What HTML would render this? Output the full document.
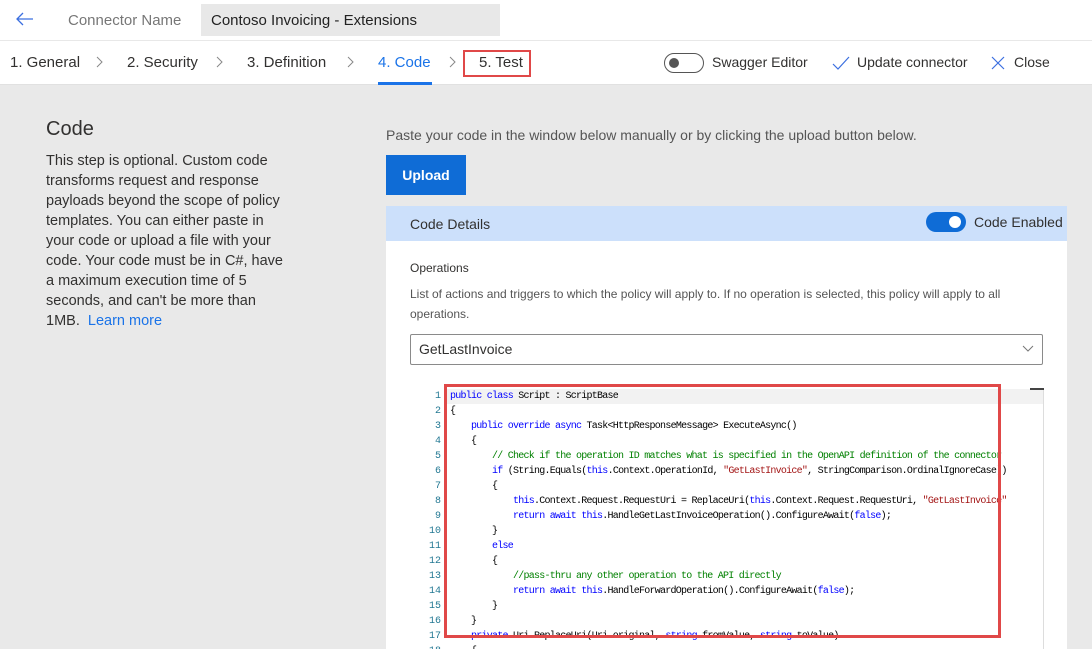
<!DOCTYPE html>
<html><head><style>
*{margin:0;padding:0;box-sizing:border-box}
body{width:1092px;height:649px;overflow:hidden;background:#e9e9e9;font-family:"Liberation Sans",sans-serif;color:#323130;position:relative}
.a{position:absolute}
.top{left:0;top:0;width:1092px;height:85px;background:#fff;border-bottom:1px solid #e1e1e1}
.t{font-size:15px;white-space:nowrap}
.code{font-family:"Liberation Mono",monospace;font-size:10px;letter-spacing:-0.75px;line-height:15px;white-space:pre;color:#000}
.ln{font-family:"Liberation Mono",monospace;font-size:10px;line-height:15px;text-align:right;color:#237893;width:24px;white-space:pre}
.k{color:#0000ff}.c{color:#008000}.s{color:#a31515}
</style></head><body>
<div class="a top"></div>
<div class="a" style="left:0;top:40px;width:1092px;height:1px;background:#e8e8e8"></div>
<svg class="a" style="left:15px;top:11px" width="20" height="16"><path d="M18 8H2M8 2L2 8l6 6" fill="none" stroke="#3b6fe0" stroke-width="1.3"/></svg>
<div class="a t" style="left:68px;top:12px;color:#777">Connector Name</div>
<div class="a" style="left:201px;top:4px;width:299px;height:32px;background:#e8e8e8"></div>
<div class="a t" style="left:211px;top:12px;color:#222">Contoso Invoicing - Extensions</div>
<div class="a t" style="left:10px;top:54px">1. General</div>
<svg class="a" style="left:96px;top:56px" width="8" height="12"><path d="M1 1l5 5-5 5" fill="none" stroke="#888"/></svg>
<div class="a t" style="left:127px;top:54px">2. Security</div>
<svg class="a" style="left:216px;top:56px" width="8" height="12"><path d="M1 1l5 5-5 5" fill="none" stroke="#888"/></svg>
<div class="a t" style="left:247px;top:54px">3. Definition</div>
<svg class="a" style="left:347px;top:56px" width="8" height="12"><path d="M1 1l5 5-5 5" fill="none" stroke="#888"/></svg>
<div class="a t" style="left:378px;top:54px;color:#1a73e8">4. Code</div>
<div class="a" style="left:378px;top:82px;width:54px;height:3px;background:#1a73e8"></div>
<svg class="a" style="left:449px;top:56px" width="8" height="12"><path d="M1 1l5 5-5 5" fill="none" stroke="#888"/></svg>
<div class="a" style="left:463px;top:50px;width:68px;height:27px;border:2px solid #e04848"></div>
<div class="a t" style="left:479px;top:54px">5. Test</div>
<div class="a" style="left:664px;top:53px;width:40px;height:20px;border:1px solid #555;border-radius:10px"></div>
<div class="a" style="left:669px;top:58px;width:10px;height:10px;background:#555;border-radius:50%"></div>
<div class="a t" style="left:712px;top:54px;font-size:14px">Swagger Editor</div>
<svg class="a" style="left:832px;top:56px" width="18" height="14"><path d="M1 8l5 5L17 1" fill="none" stroke="#3b6fe0" stroke-width="1.2"/></svg>
<div class="a t" style="left:857px;top:54px;font-size:14px">Update connector</div>
<svg class="a" style="left:991px;top:56px" width="14" height="14"><path d="M1 1l12 12M13 1L1 13" stroke="#3b6fe0" stroke-width="1.2"/></svg>
<div class="a t" style="left:1014px;top:54px;font-size:14px">Close</div>

<div class="a" style="left:46px;top:118px;font-size:20px">Code</div>
<div class="a" style="left:46px;top:151px;font-size:14.5px;line-height:20px;white-space:nowrap">This step is optional. Custom code<br>transforms request and response<br>payloads beyond the scope of policy<br>templates. You can either paste in<br>your code or upload a file with your<br>code. Your code must be in C#, have<br>a maximum execution time of 5<br>seconds, and can't be more than<br>1MB.&nbsp; <span style="color:#1a73e8">Learn more</span></div>

<div class="a t" style="left:386px;top:127px;font-size:14px;color:#555">Paste your code in the window below manually or by clicking the upload button below.</div>
<div class="a" style="left:386px;top:155px;width:80px;height:40px;background:#0f6cd6;color:#fff;font-size:14px;font-weight:bold;text-align:center;line-height:40px">Upload</div>

<div class="a" style="left:386px;top:206px;width:681px;height:443px;background:#fff"></div>
<div class="a" style="left:386px;top:206px;width:681px;height:35px;background:#cce0fb"></div>
<div class="a t" style="left:410px;top:216px;font-size:14px">Code Details</div>
<div class="a" style="left:926px;top:212px;width:40px;height:20px;background:#0f6cd6;border-radius:10px"></div>
<div class="a" style="left:949px;top:216px;width:12px;height:12px;background:#fff;border-radius:50%"></div>
<div class="a t" style="left:974px;top:214px;font-size:14px">Code Enabled</div>
<div class="a t" style="left:410px;top:261px;font-size:12px">Operations</div>
<div class="a" style="left:410px;top:284px;width:600px;font-size:12px;line-height:20px;color:#555">List of actions and triggers to which the policy will apply to. If no operation is selected, this policy will apply to all operations.</div>
<div class="a" style="left:410px;top:334px;width:633px;height:31px;border:1px solid #8a8a8a;border-radius:2px"></div>
<div class="a t" style="left:419px;top:341px;font-size:14px">GetLastInvoice</div>
<svg class="a" style="left:1022px;top:345px" width="12" height="8"><path d="M1 1l5 5 5-5" fill="none" stroke="#777"/></svg>

<div class="a" style="left:446px;top:389px;width:597px;height:15px;background:#f2f2f2"></div>
<div class="a" style="left:1043px;top:389px;width:1px;height:260px;background:#ddd"></div>
<div class="a" style="left:1030px;top:388px;width:14px;height:2px;background:#444"></div>
<div class="a" style="left:400px;top:389px;width:45px;height:260px;overflow:hidden"><div class="ln" style="margin-left:17px">1
2
3
4
5
6
7
8
9
10
11
12
13
14
15
16
17
18</div></div>
<div class="a" style="left:447px;top:389px;width:596px;height:260px;overflow:hidden"><div class="code" style="margin-left:3px"><span class="k">public class</span> Script : ScriptBase
{
    <span class="k">public override async</span> Task&lt;HttpResponseMessage&gt; ExecuteAsync()
    {
        <span class="c">// Check if the operation ID matches what is specified in the OpenAPI definition of the connector</span>
        <span class="k">if</span> (String.Equals(<span class="k">this</span>.Context.OperationId, <span class="s">"GetLastInvoice"</span>, StringComparison.OrdinalIgnoreCase))
        {
            <span class="k">this</span>.Context.Request.RequestUri = ReplaceUri(<span class="k">this</span>.Context.Request.RequestUri, <span class="s">"GetLastInvoice"</span>
            <span class="k">return await this</span>.HandleGetLastInvoiceOperation().ConfigureAwait(<span class="k">false</span>);
        }
        <span class="k">else</span>
        {
            <span class="c">//pass-thru any other operation to the API directly</span>
            <span class="k">return await this</span>.HandleForwardOperation().ConfigureAwait(<span class="k">false</span>);
        }
    }
    <span class="k">private</span> Uri ReplaceUri(Uri original, <span class="k">string</span> fromValue, <span class="k">string</span> toValue)
    {</div></div>
<div class="a" style="left:444px;top:384px;width:557px;height:254px;border:3px solid #e04848"></div>
</body></html>
